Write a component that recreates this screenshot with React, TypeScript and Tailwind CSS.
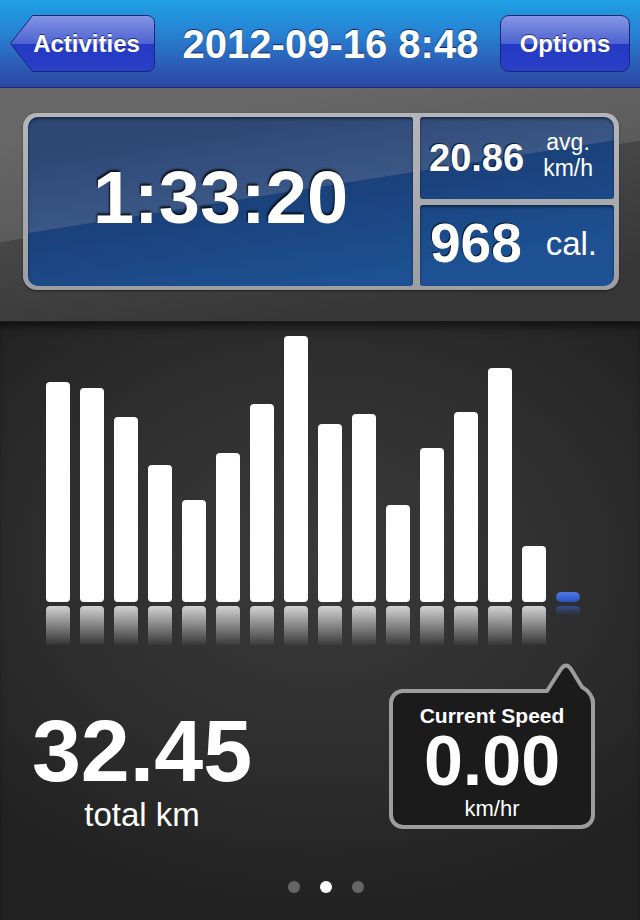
import React from "react";

const bars = [220, 214, 185, 137, 102, 149, 198, 266, 178, 188, 97, 154, 190, 234, 56];

function Header() {
  return (
    <div className="h-[88px] shrink-0 flex items-center px-[10px] bg-[linear-gradient(to_bottom,#1ea0e5_0%,#2785d4_35%,#2c5cb6_75%,#2b47a2_100%)] border-b border-[#1b2d6e]">
      <div className="relative w-[145px] h-[57px] shrink-0 flex items-center justify-center pl-[8px]">
        <svg className="absolute inset-0" width="145" height="57" viewBox="0 0 145 57">
          <defs>
            <linearGradient id="btnA" x1="0" y1="0" x2="0" y2="1">
              <stop offset="0" stopColor="#8496e3" />
              <stop offset="0.5" stopColor="#4e63d2" />
              <stop offset="0.5" stopColor="#2439c3" />
              <stop offset="1" stopColor="#2a40c8" />
            </linearGradient>
          </defs>
          <path
            d="M22.5 0.5 H137.5 A7 7 0 0 1 144.5 7.5 V49.5 A7 7 0 0 1 137.5 56.5 H22.5 L1.2 29.5 Q0.5 28.5 1.2 27.5 Z"
            fill="url(#btnA)"
            stroke="#1a2672"
            strokeWidth="1"
          />
        </svg>
        <span className="relative text-[24px] font-bold leading-none [text-shadow:0_-1px_0_rgba(0,0,40,0.6)]">
          Activities
        </span>
      </div>
      <div className="flex-1 text-center text-[40px] font-bold leading-none pl-[6px] [text-shadow:0_-1px_1px_rgba(0,0,50,0.7)]">
        2012-09-16 8:48
      </div>
      <div className="w-[130px] h-[57px] shrink-0 rounded-[9px] border border-[#1a2672] bg-[linear-gradient(to_bottom,#8496e3_0%,#4e63d2_50%,#2439c3_50%,#2a40c8_100%)] flex items-center justify-center">
        <span className="text-[24px] font-bold leading-none [text-shadow:0_-1px_0_rgba(0,0,40,0.6)]">Options</span>
      </div>
    </div>
  );
}

const blueBox =
  "bg-fixed bg-[linear-gradient(171deg,#2e4876_16%,#3b5786_23.2%,#1a417a_23.3%,#1d5193_33%)] shadow-[inset_0_2px_3px_rgba(0,0,0,0.45)]";

function Stats() {
  return (
    <div className="h-[234px] shrink-0 bg-fixed bg-[linear-gradient(171deg,#676767_13.7%,#5b5b5b_23.7%,#474747_23.7%,#363636_36.5%)] pt-[25px] pl-[23px] border-b border-[#1c1c1c]">
      <div className="w-[596px] h-[177px] rounded-[14px] bg-[linear-gradient(to_bottom,#b4b6b9,#9c9ea2)] px-[5px] py-[4px] grid grid-cols-[385px_194px] grid-rows-[82px_81px] gap-x-[7px] gap-y-[6px] shadow-[0_1px_2px_rgba(0,0,0,0.5)]">
        <div className={`row-span-2 rounded-l-[10px] rounded-r-[3px] flex items-center justify-center ${blueBox}`}>
          <span className="mb-[8px] text-[74px] font-bold leading-none [text-shadow:-1px_-2px_2px_rgba(0,0,0,0.85)]">
            1:33:20
          </span>
        </div>
        <div className={`rounded-tr-[10px] rounded-[3px] flex items-center pl-[9px] pr-[21px] ${blueBox}`}>
          <span className="text-[38px] font-bold leading-none [text-shadow:-1px_-1px_1px_rgba(0,0,0,0.7)]">20.86</span>
          <div className="ml-auto mb-[6px] flex flex-col items-center text-[23px] leading-[26px]">
            <span>avg.</span>
            <span>km/h</span>
          </div>
        </div>
        <div className={`rounded-br-[10px] rounded-[3px] flex items-center pl-[10px] pr-[17px] ${blueBox}`}>
          <span className="mb-[5px] text-[55px] font-bold leading-none [text-shadow:-1px_-1px_1px_rgba(0,0,0,0.7)]">968</span>
          <span className="ml-auto mb-[5px] text-[33px] leading-none">cal.</span>
        </div>
      </div>
    </div>
  );
}

function Bubble() {
  return (
    <div className="relative ml-auto mr-[45px] mt-[44px] w-[206px] h-[140px] rounded-[14px] border-4 border-[#9d9d9d] bg-[#1b1b1b] flex flex-col items-center pt-[11px]">
      <svg
        className="absolute left-[-4px] top-[-34px] overflow-visible"
        width="206"
        height="60"
        viewBox="0 -30 206 60"
      >
        <path
          d="M158 2 L172 -20 Q177 -27 182 -20 L193 -2 Q204 4 204 16 L204 24 L158 24 Z"
          fill="#1b1b1b"
        />
        <path
          d="M150 2 L158 2 L172 -20 Q177 -27 182 -20 L193 -2 Q204 4 204 16 L204 26"
          fill="none"
          stroke="#9d9d9d"
          strokeWidth="4"
          strokeLinejoin="round"
        />
      </svg>
      <div className="relative text-[21px] font-bold leading-[24px]">Current Speed</div>
      <div className="relative mt-[1px] text-[70px] font-bold leading-[64px]">0.00</div>
      <div className="relative mt-[4px] text-[22px] leading-[24px]">km/hr</div>
    </div>
  );
}

function Lower() {
  return (
    <div className="flex-1 flex flex-col bg-[radial-gradient(ellipse_75%_60%_at_50%_40%,#3a3a3a_0%,#2e2e2e_55%,#212121_100%)] shadow-[inset_0_8px_10px_-4px_rgba(0,0,0,0.6)]">
      <div className="h-[280px] shrink-0 flex items-end gap-[10px] pl-[46px]">
        {bars.map((h, i) => (
          <div key={i} className="w-[24px] rounded-[4px] bg-white" style={{ height: h }} />
        ))}
        <div className="w-[24px] h-[10px] rounded-[5px] bg-[linear-gradient(to_bottom,#4f78e2,#2a52c3)]" />
      </div>
      <div className="mt-[4px] h-[39px] shrink-0 flex items-start gap-[10px] pl-[46px]">
        {bars.map((_, i) => (
          <div
            key={i}
            className="w-[24px] h-[39px] rounded-t-[4px] bg-[linear-gradient(to_bottom,rgba(255,255,255,0.78),rgba(255,255,255,0.03))]"
          />
        ))}
        <div className="w-[24px] h-[9px] rounded-t-[4px] bg-[linear-gradient(to_bottom,rgba(60,100,220,0.55),rgba(60,100,220,0))]" />
      </div>
      <div className="flex items-start">
        <div className="ml-[32px] w-[220px] mt-[62px] flex flex-col items-center">
          <div className="text-[88px] font-bold leading-[88px]">32.45</div>
          <div className="mt-[3px] text-[33px] leading-[33px]">total km</div>
        </div>
        <Bubble />
      </div>
      <div className="mt-[50px] flex justify-center gap-[20px] pl-[12px]">
        <div className="w-[12px] h-[12px] rounded-full bg-[#666]" />
        <div className="w-[12px] h-[12px] rounded-full bg-white" />
        <div className="w-[12px] h-[12px] rounded-full bg-[#666]" />
      </div>
    </div>
  );
}

export default function App() {
  return (
    <div className="w-[640px] h-[920px] overflow-hidden flex flex-col font-['Liberation_Sans',Arial,sans-serif] text-white bg-[#222]">
      <Header />
      <Stats />
      <Lower />
    </div>
  );
}
